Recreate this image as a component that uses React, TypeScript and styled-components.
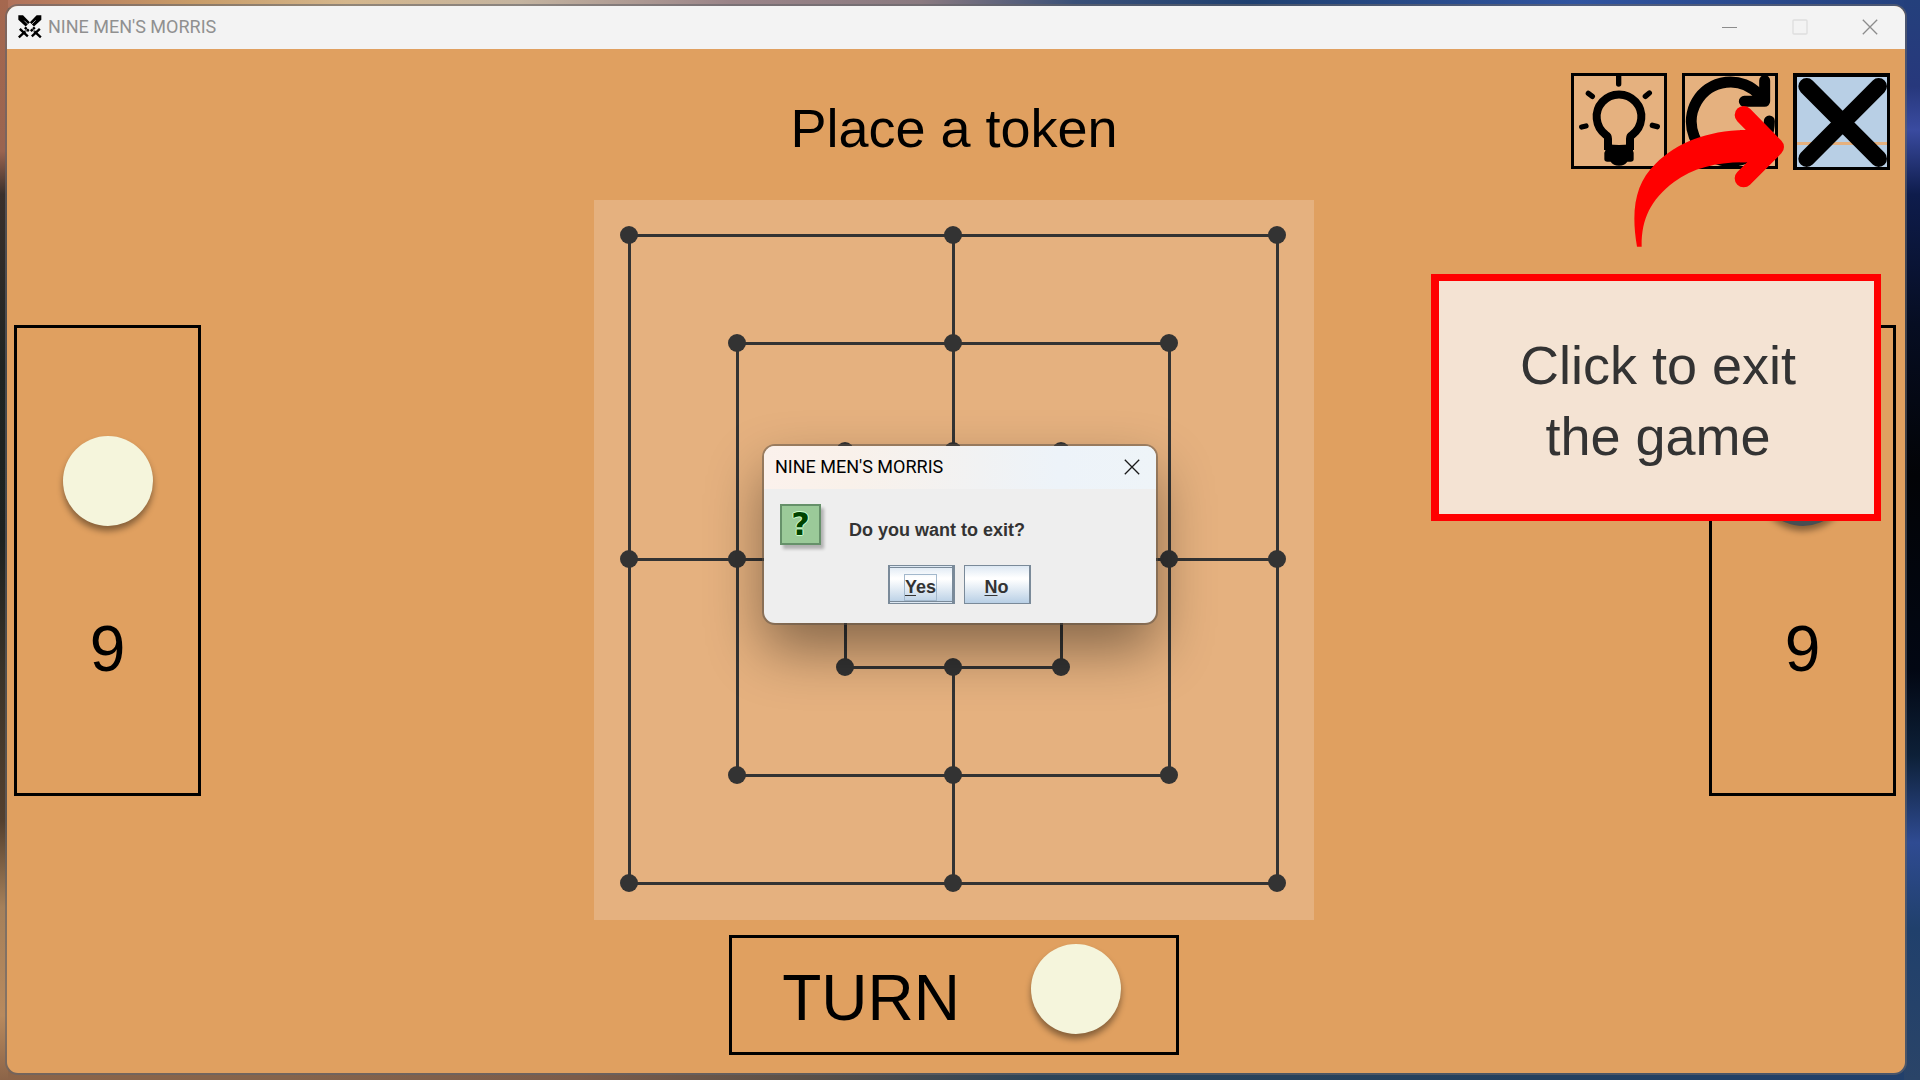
import React from "react";
import styled, { createGlobalStyle, css } from "styled-components";

const sans = '"Liberation Sans", Arial, sans-serif';
const system = 'Roboto, "Open Sans", sans-serif';
const wood = "#e0a060";
const tile = "#e5b17f";
const ink = "#333333";

const GlobalStyle = createGlobalStyle`
  * { box-sizing: border-box; }
  body { margin: 0; font-family: ${sans}; color: #000; }
  button { font-family: inherit; color: inherit; margin: 0; padding: 0; }
  h1, h2, p { margin: 0; font-weight: 400; }
  svg { display: block; }
`;

const Desktop = styled.div`
  min-height: 100vh;
  display: flex;
  padding: 6px 15px 7px 7px;
  background:
    linear-gradient(180deg, #a5684f 0, #9a6450 14%, #3a302c 18%, #1f2422 34%, #1d2220 50%, #3a3228 62%, #54402f 76%, #a5805a 84%, #b88a5e 94%, #8c6448 100%) left / 8px 100% no-repeat,
    linear-gradient(180deg, #24407c 0, #27387c 8%, #3a4ba0 12%, #0e1c4c 18%, #060d22 30%, #020306 44%, #020713 62%, #0d2038 70%, #2f4b92 78%, #20406c 86%, #2a4468 100%) right / 16px 100% no-repeat,
    linear-gradient(90deg, #b0705a 0, #c89c68 10%, #d4b68c 18%, #c4b4a0 27%, #9a8488 38%, #8a7a80 48%, #3a5078 56%, #1f4070 65%, #3054a0 82%, #24407c 100%) top / 100% 8px no-repeat,
    linear-gradient(90deg, #8c6448 0, #85644c 15%, #7c5c4a 30%, #5a5048 42%, #2c4458 54%, #24405e 80%, #22406c 100%);
`;

const Window = styled.main`
  flex: 1;
  display: flex;
  flex-direction: column;
  border-radius: 11px;
  overflow: hidden;
  box-shadow: 0 0 0 2px rgba(100, 100, 105, 0.6);
  background: ${wood};
`;

const TitleBar = styled.header`
  display: flex;
  align-items: center;
  height: 43px;
  gap: 6px;
  padding: 0 19px 2px 11px;
  background: #f3f3f3;
  font-family: ${system};
  font-size: 18px;
  color: #909090;
`;

const WindowTitle = styled.span`
  flex: 1;
  line-height: 24px;
`;

const Controls = styled.div`
  display: flex;
  gap: 38px;
`;

const ControlButton = styled.button<{ $tone?: string }>`
  display: flex;
  align-items: center;
  justify-content: center;
  width: 32px;
  height: 32px;
  border: 0;
  background: none;
  color: ${(p) => p.$tone ?? "#8c8c8c"};
`;

const Content = styled.div`
  position: relative;
  flex: 1;
  display: flex;
  flex-direction: column;
`;

const Header = styled.div`
  display: grid;
  grid-template-columns: 1fr auto 1fr;
  align-items: start;
  height: 151px;
  padding: 24px 15px 0 11px;
`;

const Prompt = styled.h1`
  grid-column: 2;
  padding-top: 24px;
  font-size: 54px;
  line-height: 62px;
`;

const Tools = styled.div`
  display: flex;
  align-items: flex-start;
  justify-content: flex-end;
  gap: 15px;
`;

const ToolButton = styled.button<{ $active?: boolean }>`
  display: block;
  border: 3px solid #000;
  background: ${tile};
  ${(p) =>
    p.$active &&
    css`
      border-width: 4px 3px 3px 4px;
      background: linear-gradient(#b8cfe5 65px, ${tile} 65px, ${tile} 68px, #b8cfe5 68px);
    `}
`;

const Table = styled.div`
  display: grid;
  grid-template-columns: 187px 1fr 187px;
  align-items: start;
  padding: 0 9px 0 7px;
`;

const Middle = styled.div`
  display: flex;
  justify-content: center;
  padding-right: 2px;
`;

const Board = styled.svg`
  background: ${tile};
`;

const Reserve = styled.section`
  display: flex;
  flex-direction: column;
  align-items: center;
  height: 471px;
  margin-top: 125px;
  padding-top: 108px;
  gap: 86px;
  border: 3px solid #000;
  font-size: 64px;
  line-height: 74px;
`;

const Token = styled.span<{ $dark?: boolean }>`
  flex: none;
  width: 90px;
  height: 90px;
  border-radius: 50%;
  background: ${(p) => (p.$dark ? "#484e52" : "#f5f5dc")};
  box-shadow: 0 5px 6px rgba(0, 0, 0, 0.4);
`;

const Footer = styled.footer`
  display: flex;
  justify-content: center;
  padding: 15px 4px 18px 0;
`;

const TurnPanel = styled.section`
  display: flex;
  align-items: center;
  justify-content: center;
  gap: 71px;
  width: 450px;
  height: 120px;
  padding-right: 5px;
  border: 3px solid #000;
  font-size: 64px;
  line-height: 74px;

  ${Token} { margin-bottom: 12px; }
`;

const TurnLabel = styled.span`
  padding-top: 6px;
`;

const Callout = styled.aside`
  position: absolute;
  top: 225px;
  right: 24px;
  width: 450px;
  padding: 49px 58px 42px 61px;
  border: 7px solid #ff0000;
  border-left-width: 8px;
  background: #f4e3d3;
  color: ${ink};
  font-size: 54px;
  line-height: 71px;
  text-align: center;
`;

const Arrow = styled.svg`
  position: absolute;
  top: 56px;
  right: 120px;
  pointer-events: none;
`;

const Dialog = styled.section`
  position: absolute;
  top: 446px;
  left: 50%;
  width: 392px;
  transform: translateX(-50%);
  border-radius: 11px;
  background: #eeeeee;
  box-shadow: 0 0 0 2px rgba(90, 80, 70, 0.5), 0 26px 56px rgba(0, 0, 0, 0.42);
`;

const DialogBar = styled.header`
  display: flex;
  align-items: center;
  justify-content: space-between;
  height: 43px;
  padding: 0 8px 2px 11px;
  border-radius: 11px 11px 0 0;
  background: linear-gradient(90deg, #fbf1ec 0, #f9f1ea 22%, #f1f2f3 55%, #edf3f9 75%, #eef4f8 100%);
  font-family: ${system};
`;

const DialogTitle = styled.h2`
  font-size: 18px;
  line-height: 24px;
`;

const Message = styled.div`
  display: flex;
  gap: 28px;
  padding: 15px 16px 0;
  font-size: 18px;
  line-height: 21px;
  color: ${ink};

  p { padding-top: 16px; font-weight: 700; }
`;

const QuestionIcon = styled.span`
  display: flex;
  align-items: center;
  justify-content: center;
  width: 41px;
  height: 41px;
  border: 2px solid #66916a;
  background: #9bca99;
  box-shadow: 3px 4px 3px rgba(0, 0, 0, 0.25);
  color: #004400;
  font-family: "DejaVu Sans", sans-serif;
  font-size: 32px;
  font-weight: 700;
  line-height: 37px;
  text-shadow: 1px 0 #ccffcc, -1px 0 #ccffcc, 0 1px #ccffcc, 0 -1px #ccffcc;
`;

const Actions = styled.div`
  display: flex;
  justify-content: center;
  gap: 9px;
  padding: 20px 2px 19px 0;
`;

const ActionButton = styled.button<{ $default?: boolean }>`
  display: flex;
  align-items: center;
  justify-content: center;
  width: 67px;
  height: 39px;
  padding-top: 5px;
  border: 1px solid #7a8a99;
  border-right-width: 2px;
  background: linear-gradient(#dde8f3 0, #ffffff 32%, #ffffff 36%, #b8cfe5 100%);
  color: ${ink};
  font-size: 18px;
  font-weight: 700;
  line-height: 25px;
  ${(p) =>
    p.$default &&
    css`
      border-width: 1px 3px 1px 2px;
      box-shadow: inset 0 1px #dde8f3, inset 0 2px #7a8a99, inset 0 -1px #dde8f3, inset 0 -2px #7a8a99;
    `}

  u { text-underline-offset: 2px; text-decoration-thickness: 1px; }
`;

const FocusRing = styled.span`
  outline: 1px solid #a3b8cc;
`;

const SwordsIcon = () => (
  <svg width="24" height="24" viewBox="53 41 72 72" aria-hidden="true">
    <path d="M54 42H68L106 81L94 92L54 55ZM123 42H109L71 81L83 92L123 55Z" />
    <g fill="none" stroke="#000" strokeWidth="7" strokeLinecap="square">
      <path d="M61 85 80 103M116 85 97 103" />
      <path d="M74 91 58 106M103 91 119 106" />
    </g>
    <path fill="none" stroke="#f3f3f3" strokeWidth="2" d="M72 58 99 85M106 57 78 85M69 83 84 98M108 83 93 98M88 84V94" />
  </svg>
);

const CloseGlyph = () => (
  <svg width="16" height="16" viewBox="0 0 16 16" fill="none" stroke="currentColor" strokeWidth="1.3" aria-hidden="true">
    <path d="M0.8 0.8 15.2 15.2M15.2 0.8 0.8 15.2" />
  </svg>
);

const BulbIcon = () => (
  <svg width="90" height="90" viewBox="102 78 270 270" fill="none" stroke="#000" aria-hidden="true">
    <path strokeWidth="24" d="M204 300V266Q204 258 197 254A67 67 0 1 1 277 254Q270 258 270 266V300" />
    <path
      fill="#000"
      stroke="none"
      d="M204 283Q237 287 270 283L279 290V302L281 308V328Q281 335 272 335H262Q254 347 237 347Q220 347 212 335H202Q193 335 193 328V308L196 302V288Z"
    />
    <path strokeWidth="16" strokeLinecap="round" d="M236 76V102M145 130 157 139M328 129 316 139M125 231 138 228M337 226 352 230" />
  </svg>
);

const RestartIcon = () => (
  <svg width="90" height="90" viewBox="435 78 270 270" fill="none" stroke="#000" aria-hidden="true">
    <path strokeWidth="33" strokeLinecap="round" d="M688 213A117 119 0 1 1 656 133" />
    <path strokeWidth="33" strokeLinecap="round" strokeLinejoin="round" d="M674 92V154H613" />
  </svg>
);

const ExitIcon = () => (
  <svg width="90" height="90" viewBox="771 81 270 270" fill="none" stroke="#000" aria-hidden="true">
    <path strokeWidth="50" strokeLinecap="round" d="M800 109 1016 326M1016 109 800 326" />
  </svg>
);

const ORIGIN = 35;
const STEP = 108;
const rings = [0, 1, 2];

function MorrisBoard() {
  const at = (n: number) => ORIGIN + n * STEP;
  const nodes = rings.flatMap((r) => {
    const line = [r, 3, 6 - r];
    return line.flatMap((x) => line.filter((y) => x !== 3 || y !== 3).map((y) => [x, y]));
  });
  return (
    <Board width="720" height="720" viewBox="0 0 720 720" role="img" aria-label="Board">
      <g transform="translate(0.5 0.5)" fill="none" stroke={ink} strokeWidth="3">
        {rings.map((r) => (
          <rect key={r} x={at(r)} y={at(r)} width={(6 - 2 * r) * STEP} height={(6 - 2 * r) * STEP} />
        ))}
        <path d={`M${at(3)} ${at(0)}V${at(2)}M${at(3)} ${at(4)}V${at(6)}M${at(0)} ${at(3)}H${at(2)}M${at(4)} ${at(3)}H${at(6)}`} />
      </g>
      <g fill={ink}>
        {nodes.map(([x, y]) => (
          <circle key={`${x}-${y}`} cx={at(x)} cy={at(y)} r="9" />
        ))}
      </g>
    </Board>
  );
}

export default function App() {
  return (
    <Desktop>
      <GlobalStyle />
      <Window>
        <TitleBar>
          <SwordsIcon />
          <WindowTitle>NINE MEN'S MORRIS</WindowTitle>
          <Controls>
            <ControlButton aria-label="Minimize">
              <svg width="16" height="16" viewBox="0 0 16 16" aria-hidden="true">
                <path d="M0 8.5H15" stroke="currentColor" />
              </svg>
            </ControlButton>
            <ControlButton aria-label="Maximize" $tone="#dedede">
              <svg width="16" height="16" viewBox="0 0 16 16" aria-hidden="true">
                <rect x="1" y="1" width="14" height="14" rx="1" fill="none" stroke="currentColor" strokeWidth="1.4" />
              </svg>
            </ControlButton>
            <ControlButton aria-label="Close">
              <CloseGlyph />
            </ControlButton>
          </Controls>
        </TitleBar>

        <Content>
          <Header>
            <Prompt>Place a token</Prompt>
            <Tools>
              <ToolButton aria-label="Hint">
                <BulbIcon />
              </ToolButton>
              <ToolButton aria-label="Restart">
                <RestartIcon />
              </ToolButton>
              <ToolButton aria-label="Exit" $active>
                <ExitIcon />
              </ToolButton>
            </Tools>
          </Header>

          <Table>
            <Reserve>
              <Token />
              <span>9</span>
            </Reserve>
            <Middle>
              <MorrisBoard />
            </Middle>
            <Reserve>
              <Token $dark />
              <span>9</span>
            </Reserve>
          </Table>

          <Footer>
            <TurnPanel>
              <TurnLabel>TURN</TurnLabel>
              <Token />
            </TurnPanel>
          </Footer>

          <Callout>Click to exit the game</Callout>
          <Arrow width="152" height="143" viewBox="279 165 456 429" aria-hidden="true">
            <path
              fill="#ff0000"
              d="M291 590C272 480 286 400 346 342C410 278 500 242 616 240L705 292L618 337C540 335 460 352 402 396C330 450 304 510 305 590Z"
            />
            <path fill="none" stroke="#ff0000" strokeWidth="54" strokeLinecap="round" strokeLinejoin="round" d="M611 195 705 291 611 385" />
            <path fill="#ff0000" d="M600 240H660V337H600Z" />
          </Arrow>
        </Content>
      </Window>

      <Dialog role="dialog" aria-labelledby="exit-title">
        <DialogBar>
          <DialogTitle id="exit-title">NINE MEN'S MORRIS</DialogTitle>
          <ControlButton aria-label="Close dialog" $tone="#1a1a1a">
            <CloseGlyph />
          </ControlButton>
        </DialogBar>
        <Message>
          <QuestionIcon aria-hidden="true">?</QuestionIcon>
          <p>Do you want to exit?</p>
        </Message>
        <Actions>
          <ActionButton $default>
            <FocusRing>
              <u>Y</u>es
            </FocusRing>
          </ActionButton>
          <ActionButton>
            <span>
              <u>N</u>o
            </span>
          </ActionButton>
        </Actions>
      </Dialog>
    </Desktop>
  );
}
